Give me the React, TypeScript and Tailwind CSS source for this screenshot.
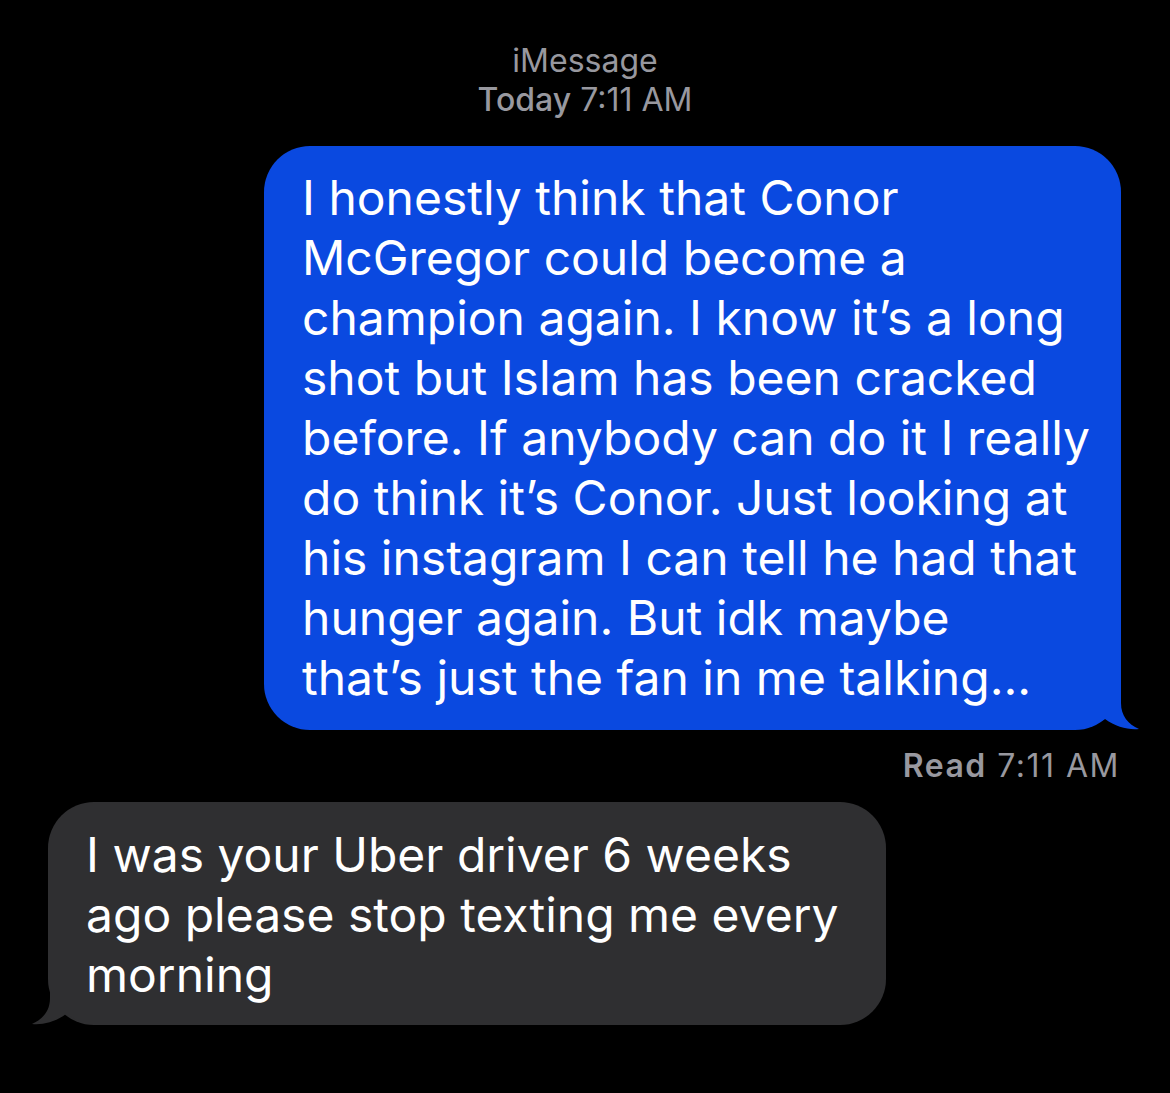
const blueLines = [
  'I honestly think that Conor',
  'McGregor could become a',
  'champion again. I know it\u2019s a long',
  'shot but Islam has been cracked',
  'before. If anybody can do it I really',
  'do think it\u2019s Conor. Just looking at',
  'his instagram I can tell he had that',
  'hunger again. But idk maybe',
  'that\u2019s just the fan in me talking...',
];

const grayLines = ['I was your Uber driver 6 weeks', 'ago please stop texting me every', 'morning'];

const App = () => {
  return (
    <div className="w-[1170px] h-[1093px] bg-black flex flex-col font-['Inter','Liberation_Sans',sans-serif] antialiased">
      <div className="pt-[41px] text-center text-[32px] leading-[39px] text-[#98989f]">
        <div>iMessage</div>
        <div>
          <span className="font-medium">Today</span> 7:11 AM
        </div>
      </div>

      <div className="mt-[27px] flex justify-end pr-[49px]">
        <div className="relative w-[857px] rounded-[46px] bg-[#0a49e0] pl-[38px] pt-[22px] pb-[22px] text-[48px] leading-[60px] text-white">
          {blueLines.map((l) => (
            <div key={l} className="whitespace-nowrap">{l}</div>
          ))}
          <svg className="absolute -right-[19px] bottom-0" width="50" height="50" viewBox="0 0 50 50">
            <path d="M0 0 L31 0 L31 23 C31 36 38 44 49 49 C38 50 26 47 15 39 L0 47 Z" fill="#0a49e0" />
          </svg>
        </div>
      </div>

      <div className="mt-[18px] pr-[50px] text-right text-[32px] leading-[36px] tracking-[1.5px] text-[#98989f]">
        <span className="font-semibold">Read</span> 7:11 AM
      </div>

      <div className="mt-[18px] flex pl-[48px]">
        <div className="relative w-[838px] rounded-[46px] bg-[#2f2f31] pl-[38px] pt-[23px] pb-[20px] text-[48px] leading-[60px] text-white">
          {grayLines.map((l) => (
            <div key={l} className="whitespace-nowrap">{l}</div>
          ))}
          <svg className="absolute -left-[17px] bottom-0" width="50" height="50" viewBox="0 0 50 50">
            <path d="M50 0 L19 0 L19 23 C19 36 12 44 1 49 C12 50 24 47 35 39 L50 47 Z" fill="#2f2f31" />
          </svg>
        </div>
      </div>
    </div>
  );
};

export default App;
